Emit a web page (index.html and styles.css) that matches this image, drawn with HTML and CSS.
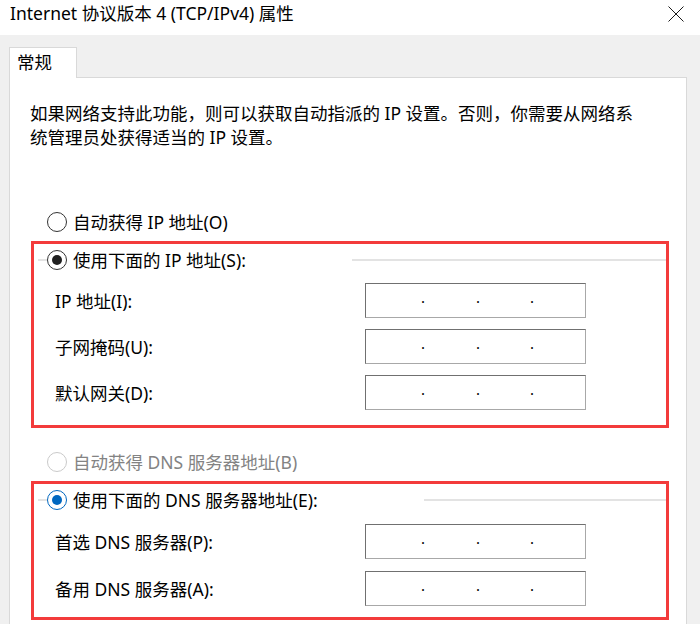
FILE: index.html
```html
<!DOCTYPE html>
<html lang="zh-CN">
<head>
  <meta charset="UTF-8">
  <title>Internet 协议版本 4 (TCP/IPv4) 属性</title>
  <link rel="stylesheet" href="styles.css">
</head>
<body>

<!-- Title bar -->
<div class="titlebar">
  <span class="title">Internet 协议版本 4 (TCP/IPv4) 属性</span>
  <svg class="close" viewBox="0 0 16 16" width="16" height="16">
    <path d="M0.5 0.5 L15.5 15.5 M15.5 0.5 L0.5 15.5" stroke="#1a1a1a" stroke-width="1" fill="none"/>
  </svg>
</div>

<div class="dialog">
  <div class="tabs">
    <div class="tab">常规</div>
  </div>

  <div class="panel">
    <p class="intro">如果网络支持此功能，则可以获取自动指派的 IP 设置。否则，你需要从网络系<br>统管理员处获得适当的 IP 设置。</p>

    <div class="radio standalone">
      <span class="dot"></span>自动获得 IP 地址(O)
    </div>

    <!-- Static IP group -->
    <div class="group">
      <div class="legend">
        <span class="edge"></span>
        <div class="radio">
          <span class="dot checked"></span>使用下面的 IP 地址(S):
        </div>
        <span class="rule"></span>
      </div>
      <div class="field">
        <span class="name">IP 地址(I):</span>
        <div class="ipbox"><span></span><span class="sep">.</span><span></span><span class="sep">.</span><span></span><span class="sep">.</span><span></span></div>
      </div>
      <div class="field">
        <span class="name">子网掩码(U):</span>
        <div class="ipbox"><span></span><span class="sep">.</span><span></span><span class="sep">.</span><span></span><span class="sep">.</span><span></span></div>
      </div>
      <div class="field">
        <span class="name">默认网关(D):</span>
        <div class="ipbox"><span></span><span class="sep">.</span><span></span><span class="sep">.</span><span></span><span class="sep">.</span><span></span></div>
      </div>
    </div>

    <div class="radio standalone after-group disabled">
      <span class="dot"></span>自动获得 DNS 服务器地址(B)
    </div>

    <!-- Static DNS group -->
    <div class="group dns">
      <div class="legend">
        <span class="edge"></span>
        <div class="radio">
          <span class="dot checked blue"></span>使用下面的 DNS 服务器地址(E):
        </div>
        <span class="rule"></span>
      </div>
      <div class="field">
        <span class="name">首选 DNS 服务器(P):</span>
        <div class="ipbox"><span></span><span class="sep">.</span><span></span><span class="sep">.</span><span></span><span class="sep">.</span><span></span></div>
      </div>
      <div class="field">
        <span class="name">备用 DNS 服务器(A):</span>
        <div class="ipbox"><span></span><span class="sep">.</span><span></span><span class="sep">.</span><span></span><span class="sep">.</span><span></span></div>
      </div>
    </div>
  </div>
</div>

</body>
</html>
```

FILE: styles.css
```css
body {
  margin: 0;
  width: 700px;
  height: 624px;
  overflow: hidden;
  background-color: #f0f0f0;
  font-family: "Noto Sans", "Noto Sans CJK SC", sans-serif;
  font-size: 17.5px;
  color: #000;
}

.titlebar {
  height: 35px;
  background-color: #fff;
  display: flex;
  justify-content: space-between;
  align-items: flex-start;
  padding-left: 10px;
  box-sizing: border-box;
}

.title {
  line-height: 26px;
}

.close {
  margin: 6px 16px 0 0;
}

.dialog {
  padding: 12px 13px 0 9px;
}

.tab {
  width: 68px;
  height: 31px;
  box-sizing: border-box;
  border: 1px solid #d9d9d9;
  border-bottom: none;
  background-color: #fff;
  padding-left: 7px;
  line-height: 29px;
  position: relative;
  z-index: 1;
  margin-bottom: -1px;
}

.panel {
  background-color: #fff;
  border: 1px solid #d9d9d9;
  border-bottom: none;
  height: 547px;
  box-sizing: border-box;
  padding: 23px 17px 0 21px;
}

.intro {
  margin: 0 0 0 -1px;
  line-height: 24px;
}

.radio {
  display: flex;
  align-items: center;
  height: 24px;
  line-height: 22px;
  white-space: nowrap;
}

.standalone {
  margin-top: 61px;
  margin-left: 16px;
}

.standalone.after-group {
  margin-top: 22px;
}

.disabled {
  color: #838383;
}

.dot {
  width: 20px;
  height: 20px;
  box-sizing: border-box;
  border: 1px solid #333;
  border-radius: 50%;
  margin-right: 6px;
  display: flex;
  align-items: center;
  justify-content: center;
  background-color: #fff;
}

.disabled .dot {
  border-color: #cacaca;
}

.dot.checked::after {
  content: "";
  width: 10px;
  height: 10px;
  border-radius: 50%;
  background-color: #1f1f1f;
}

.dot.blue {
  border-color: #0067c0;
}

.dot.blue::after {
  background-color: #0067c0;
}

.group {
  border: 3px solid #f33b3b;
  margin-top: 7px;
  padding: 4px 0 15px 0;
}

.group.dns {
  padding-bottom: 11px;
}

.legend {
  display: flex;
  align-items: center;
  padding-left: 4px;
}

.edge {
  width: 9px;
  height: 2px;
  background-color: #e3e3e3;
}

.rule {
  flex: 1;
  height: 2px;
  margin-left: 106px;
  background-color: #e3e3e3;
}

.field {
  display: flex;
  align-items: center;
  height: 35px;
  margin-top: 11px;
  padding-left: 21px;
}

.dns .field {
  margin-top: 12px;
}

.name {
  width: 310px;
}

.ipbox {
  width: 221px;
  height: 35px;
  box-sizing: border-box;
  border: 1px solid #707070;
  border-right-color: #a8a8a8;
  border-bottom-color: #a8a8a8;
  display: grid;
  grid-template-columns: 55.5px 3px 52px 3px 51px 3px 1fr;
  line-height: 27px;
  font-size: 15px;
}

.sep {
  display: flex;
  justify-content: center;
}
```
